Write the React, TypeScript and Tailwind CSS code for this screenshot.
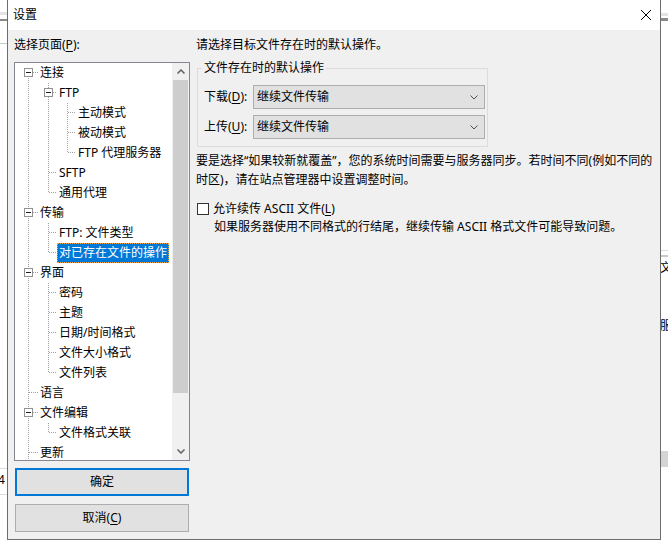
import React from "react";

type TreeNode = {
  label: string;
  level: number;
  box?: boolean;
  selected?: boolean;
};

const nodes: TreeNode[] = [
  { label: "连接", level: 0, box: true },
  { label: "FTP", level: 1, box: true },
  { label: "主动模式", level: 2 },
  { label: "被动模式", level: 2 },
  { label: "FTP 代理服务器", level: 2 },
  { label: "SFTP", level: 1 },
  { label: "通用代理", level: 1 },
  { label: "传输", level: 0, box: true },
  { label: "FTP: 文件类型", level: 1 },
  { label: "对已存在文件的操作", level: 1, selected: true },
  { label: "界面", level: 0, box: true },
  { label: "密码", level: 1 },
  { label: "主题", level: 1 },
  { label: "日期/时间格式", level: 1 },
  { label: "文件大小格式", level: 1 },
  { label: "文件列表", level: 1 },
  { label: "语言", level: 0 },
  { label: "文件编辑", level: 0, box: true },
  { label: "文件格式关联", level: 1 },
  { label: "更新", level: 0 },
];

// x of the connector line / text start for each depth, relative to the list
const LX = [13, 33, 52];
const TX = [25, 44, 63];
const indent = ["pl-[25px]", "pl-[44px]", "pl-[63px]"];
const LIST_H = 397;

const cy = (i: number) => i * 20 + 9.5;

function TreeLines() {
  const segs: React.ReactNode[] = [];

  // root line runs past the visible end
  segs.push(
    <line key="root" x1={LX[0] + 0.5} y1={9} x2={LX[0] + 0.5} y2={LIST_H} />
  );

  nodes.forEach((n, p) => {
    if (!n.box) return;
    let last = -1;
    for (let j = p + 1; j < nodes.length && nodes[j].level > n.level; j++) {
      if (nodes[j].level === n.level + 1) last = j;
    }
    if (last < 0) return;
    const x = LX[n.level + 1] + 0.5;
    segs.push(<line key={`v${p}`} x1={x} y1={(p + 1) * 20} x2={x} y2={cy(last)} />);
  });

  nodes.forEach((n, i) => {
    const x1 = LX[n.level] + (n.box ? 5 : 1);
    segs.push(<line key={`h${i}`} x1={x1} y1={cy(i)} x2={TX[n.level] - 2} y2={cy(i)} />);
  });

  return (
    <svg
      className="absolute left-0 top-0 pointer-events-none"
      width={157}
      height={LIST_H}
      viewBox={`0 0 157 ${LIST_H}`}
    >
      <g stroke="#a0a0a0" strokeWidth={1} strokeDasharray="1 1" fill="none">
        {segs}
      </g>
      {nodes.map((n, i) =>
        n.box ? (
          <g key={`b${i}`}>
            <rect
              x={LX[n.level] - 4 + 0.5}
              y={i * 20 + 5.5}
              width={8}
              height={8}
              fill="#fff"
              stroke="#919191"
            />
            <line
              x1={LX[n.level] - 2}
              y1={cy(i)}
              x2={LX[n.level] + 3}
              y2={cy(i)}
              stroke="#1f1f1f"
            />
          </g>
        ) : null
      )}
    </svg>
  );
}

function Chevron({ up = false, className = "" }: { up?: boolean; className?: string }) {
  return (
    <svg width="8" height="5" viewBox="0 0 8 5" className={className}>
      <path
        d={up ? "M0.5 4.5 L4 1 L7.5 4.5" : "M0.5 0.5 L4 4 L7.5 0.5"}
        fill="none"
        stroke="#606060"
        strokeWidth={up ? 1.5 : 1.5}
      />
    </svg>
  );
}

function ComboBox({ value }: { value: string }) {
  return (
    <div className="w-[232px] h-[24px] border border-[#adadad] bg-[#e1e1e1] flex items-center justify-between pl-[3px] pr-[6px]">
      <span className="leading-[16px]">{value}</span>
      <svg width="8" height="5" viewBox="0 0 8 5">
        <path d="M0.5 0.5 L4 4 L7.5 0.5" fill="none" stroke="#505050" strokeWidth={1} />
      </svg>
    </div>
  );
}

function Backdrop() {
  return (
    <>
      {/* window behind, left strip */}
      <div className="absolute left-0 top-[12px] w-[8px] h-[3px] bg-[#e3e3e3]" />
      <div className="absolute left-0 top-[19px] w-[8px] h-[2px] bg-[#8a8a8a]" />
      <div className="absolute left-0 top-[43px] w-[8px] h-[1px] bg-[#c8c8c8]" />
      <div className="absolute left-0 top-[468px] w-[8px] h-[1px] bg-[#dcdcdc]" />
      <div className="absolute left-0 top-[494px] w-[8px] h-[1px] bg-[#dcdcdc]" />
      <div className="absolute left-[-2px] top-[472px] text-[12px] leading-[16px]">4</div>
      {/* window behind, right strip */}
      <div className="absolute left-[660px] top-[13px] w-[8px] h-[3px] bg-[#e3e3e3]" />
      <div className="absolute left-[660px] top-[18px] w-[8px] h-[3px] bg-[#8a8a8a]" />
      <div className="absolute left-[660px] top-[250px] w-[8px] h-[1px] bg-[#dcdcdc]" />
      <div className="absolute left-[660px] top-[255px] w-[8px] h-[2px] bg-[#c8c8c8]" />
      <div className="absolute left-[660px] top-[260px] text-[12px] leading-[16px]">文</div>
      <div className="absolute left-[660px] top-[318px] text-[12px] leading-[16px]">服</div>
      <div className="absolute left-[660px] top-[451px] w-[8px] h-[16px] bg-[#d4d4d4]" />
    </>
  );
}

export default function App() {
  return (
    <div className="relative w-[668px] h-[547px] bg-white overflow-hidden text-black text-[12px] font-['Noto_Sans','Noto_Sans_CJK_SC',sans-serif]">
      <Backdrop />

      <div className="absolute left-[7px] top-0 w-[654px] h-[540px] border-x border-b border-[#6d6d6d] flex flex-col">
        {/* Title bar */}
        <div className="h-[30px] bg-white flex items-center justify-between pl-[5px] pr-[9px]">
          <span className="leading-[16px]">设置</span>
          <svg width="10" height="10" viewBox="0 0 10 10">
            <path d="M0 0 L10 10 M10 0 L0 10" stroke="#000" strokeWidth={1} />
          </svg>
        </div>

        {/* Body */}
        <div className="flex-1 bg-[#f0f0f0] flex pt-[7px]">
          {/* Left column */}
          <div className="w-[176px] ml-[6px] flex flex-col">
            <div className="h-[16px] leading-[16px]">
              选择页面(<span className="underline underline-offset-2">P</span>):
            </div>

            <div className="mt-[9px] h-[399px] border border-[#828790] bg-white flex">
              <div className="relative w-[157px] h-[397px] overflow-hidden">
                <TreeLines />
                {nodes.map((n, i) => (
                  <div key={i} className={`h-[20px] leading-[20px] whitespace-nowrap ${indent[n.level]}`}>
                    {n.selected ? (
                      <span className="relative inline-block -ml-[2px] px-[2px] h-[20px] bg-[#0078d7] text-white outline-1 outline-dotted outline-[#f3a54a] -outline-offset-1">
                        {n.label}
                      </span>
                    ) : (
                      <span className="relative">{n.label}</span>
                    )}
                  </div>
                ))}
              </div>

              {/* Scrollbar */}
              <div className="w-[17px] flex flex-col bg-[#f0f0f0]">
                <div className="h-[17px] flex items-center justify-center">
                  <Chevron up />
                </div>
                <div className="flex-1 flex flex-col">
                  <div className="h-[313px] mx-[1px] bg-[#cdcdcd]" />
                </div>
                <div className="h-[17px] flex items-center justify-center">
                  <Chevron />
                </div>
              </div>
            </div>

            <button className="mt-[7px] ml-[1px] w-[174px] h-[28px] border-2 border-[#0078d7] bg-[#e1e1e1] leading-[16px]">
              确定
            </button>
            <button className="mt-[8px] ml-[1px] w-[174px] h-[28px] border border-[#adadad] bg-[#e1e1e1] leading-[16px]">
              取消(<span className="underline underline-offset-2">C</span>)
            </button>
          </div>

          {/* Right column */}
          <div className="ml-[6px] flex-1 flex flex-col">
            <div className="h-[16px] leading-[16px]">请选择目标文件存在时的默认操作。</div>

            <div className="relative mt-[15px] ml-[1px] w-[291px] h-[79px] border border-[#dcdcdc] pt-[16px] pl-[6px] flex flex-col gap-[6px]">
              <span className="absolute left-[4px] top-[-9px] px-[2px] bg-[#f0f0f0] leading-[16px]">
                文件存在时的默认操作
              </span>
              <div className="flex items-center">
                <span className="w-[49px] leading-[16px]">
                  下载(<span className="underline underline-offset-2">D</span>):
                </span>
                <ComboBox value="继续文件传输" />
              </div>
              <div className="flex items-center">
                <span className="w-[49px] leading-[16px]">
                  上传(<span className="underline underline-offset-2">U</span>):
                </span>
                <ComboBox value="继续文件传输" />
              </div>
            </div>

            <p className="mt-[4px] leading-[19px] whitespace-nowrap">
              要是选择“如果较新就覆盖”，您的系统时间需要与服务器同步。若时间不同(例如不同的
              <br />
              时区)，请在站点管理器中设置调整时间。
            </p>

            <label className="mt-[11px] h-[18px] flex items-center">
              <span className="ml-[1px] w-[12px] h-[12px] border border-[#333] bg-white" />
              <span className="ml-[4px] leading-[16px]">
                允许续传 ASCII 文件(<span className="underline underline-offset-2">L</span>)
              </span>
            </label>
            <div className="h-[18px] leading-[18px] pl-[18px] whitespace-nowrap">
              如果服务器使用不同格式的行结尾，继续传输 ASCII 格式文件可能导致问题。
            </div>
          </div>
        </div>
      </div>
    </div>
  );
}
